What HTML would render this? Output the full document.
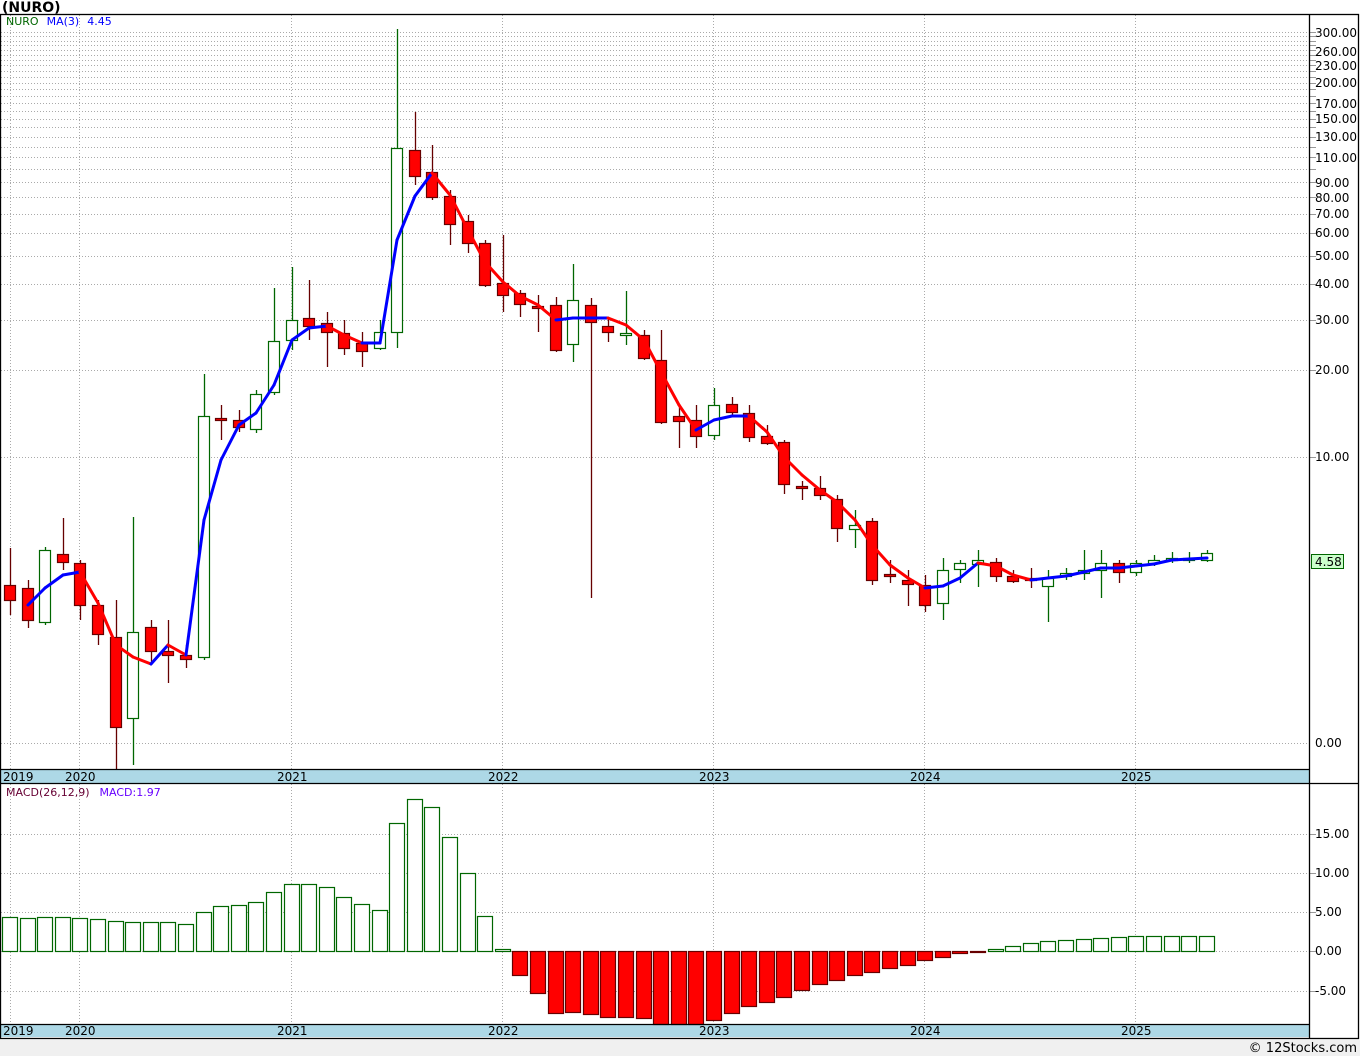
<!DOCTYPE html>
<html><head><meta charset="utf-8">
<style>
html,body{margin:0;padding:0;background:#fff;}
body{width:1360px;height:1056px;overflow:hidden;position:relative;font-family:"Liberation Sans",sans-serif;}
svg text{font-family:"DejaVu Sans","Liberation Sans",sans-serif;}
</style></head><body>
<svg id="s" width="1360" height="1056" xmlns="http://www.w3.org/2000/svg">
<rect x="0" y="1040" width="1360" height="16" fill="#f0f0f0"/>
<text x="2" y="12" font-size="14" font-weight="bold" fill="#000">(NURO)</text>
<g id="grid"></g>
<rect x="1" y="770" width="1308" height="13" fill="#add8e6"/>
<rect x="1" y="1024" width="1308" height="13" fill="#add8e6"/>
<g font-size="12" fill="#000">
<text x="3" y="781">2019</text><text x="65" y="781">2020</text><text x="277" y="781">2021</text><text x="488" y="781">2022</text><text x="699" y="781">2023</text><text x="910" y="781">2024</text><text x="1121" y="781">2025</text>
<text x="3" y="1035">2019</text><text x="65" y="1035">2020</text><text x="277" y="1035">2021</text><text x="488" y="1035">2022</text><text x="699" y="1035">2023</text><text x="910" y="1035">2024</text><text x="1121" y="1035">2025</text>
</g>
<g id="shapes"></g>
<g stroke="#000" stroke-width="1.3" fill="none">
<rect x="0.5" y="14.5" width="1358" height="1024"/>
<line x1="1309.5" y1="14" x2="1309.5" y2="1038"/>
<line x1="0" y1="769.5" x2="1309" y2="769.5"/>
<line x1="0" y1="783.5" x2="1359" y2="783.5"/>
<line x1="0" y1="1024.5" x2="1309" y2="1024.5"/>
</g>
<text x="6" y="25" font-size="11"><tspan fill="#006600">NURO</tspan><tspan fill="#0000ff" dx="8">MA(3)</tspan><tspan fill="#0000ff" dx="8">4.45</tspan></text>
<text x="6" y="796" font-size="11"><tspan fill="#660033">MACD(26,12,9)</tspan><tspan fill="#6600ff" dx="10">MACD:1.97</tspan></text>
<g font-size="12" fill="#000">
<text x="1315" y="37">300.00</text><text x="1315" y="56">260.00</text><text x="1315" y="70">230.00</text><text x="1315" y="87">200.00</text>
<text x="1315" y="108">170.00</text><text x="1315" y="123">150.00</text><text x="1315" y="141">130.00</text><text x="1315" y="162">110.00</text>
<text x="1315" y="187">90.00</text><text x="1315" y="202">80.00</text><text x="1315" y="218">70.00</text><text x="1315" y="237">60.00</text>
<text x="1315" y="260">50.00</text><text x="1315" y="288">40.00</text><text x="1315" y="324">30.00</text><text x="1315" y="374">20.00</text>
<text x="1315" y="461">10.00</text><text x="1315" y="747">0.00</text>
<text x="1315" y="838">15.00</text><text x="1315" y="877">10.00</text><text x="1315" y="916">5.00</text><text x="1315" y="955">0.00</text><text x="1315" y="995">-5.00</text>
</g>
<rect x="1311.5" y="554.5" width="32" height="14" fill="#ccffcc" stroke="#006600"/>
<text x="1315" y="566" font-size="12" fill="#000">4.58</text>
<text x="1357" y="1052" font-size="13" fill="#000" text-anchor="end">© 12Stocks.com</text>
</svg>
<script>
var NS="http://www.w3.org/2000/svg";
function el(p,t,a){var e=document.createElementNS(NS,t);for(var k in a)e.setAttribute(k,a[k]);p.appendChild(e);return e;}
var G=document.getElementById('grid'),S=document.getElementById('shapes');
var years=[10,79,291,502,713,924,1135];
years.forEach(function(x){el(G,'line',{x1:x+.5,y1:15,x2:x+.5,y2:769,stroke:'#aaa','stroke-dasharray':'1,2'});el(G,'line',{x1:x+.5,y1:784,x2:x+.5,y2:1024,stroke:'#aaa','stroke-dasharray':'1,2'});});
function py(v){return 457-287.7*Math.log10(v/10);}
for(var v=10;v<=300;v+=10){var y=Math.round(py(v))+.5;el(G,'line',{x1:1,y1:y,x2:1309,y2:y,stroke:'#aaa','stroke-dasharray':'1,2'});el(G,'line',{x1:1310,y1:y,x2:1316,y2:y,stroke:'#999'});}
[743.5].forEach(function(y){el(G,'line',{x1:1,y1:y,x2:1309,y2:y,stroke:'#aaa','stroke-dasharray':'1,2'});});
[834.5,873.5,912.5,951.5,991.5].forEach(function(y){el(G,'line',{x1:1,y1:y,x2:1309,y2:y,stroke:'#aaa','stroke-dasharray':'1,2'});el(G,'line',{x1:1310,y1:y,x2:1316,y2:y,stroke:'#999'});});
var C=[[585,600,548,615,0],[588,620,580,628,0],[550,622,547,625,1],[554,562,518,570,0],[563,605,560,620,0],[605,634,600,645,0],[637,727,600,770,0],[632,718,517,765,1],[627,651,620,665,0],[651,655,620,683,0],[655,659,645,668,0],[416,657,374,660,1],[418,420,405,440,0],[420,427,410,432,0],[394,429,390,433,1],[341,392,288,395,1],[320,340,267,350,1],[318,326,280,340,0],[323,332,312,367,0],[333,348,320,355,0],[343,351,332,367,0],[332,348,320,350,1],[148,332,29,348,1],[150,176,112,185,0],[172,197,145,200,0],[196,224,190,245,0],[221,243,215,253,0],[243,285,240,287,0],[283,295,235,312,0],[293,304,290,317,0],[306,308,295,332,0],[305,350,297,352,0],[300,344,264,362,1],[305,322,298,598,0],[326,332,318,342,0],[333,335,291,345,1],[335,358,330,360,0],[360,422,330,424,0],[416,421,405,448,0],[420,436,405,448,0],[405,435,388,440,1],[404,412,397,415,0],[413,437,405,442,0],[436,443,425,445,0],[442,484,440,494,0],[486,488,481,500,0],[488,495,476,500,0],[499,528,495,542,0],[525,529,510,548,1],[521,580,518,585,0],[574,576,560,583,0],[580,584,570,606,0],[585,605,575,612,0],[570,603,558,620,1],[563,569,560,583,1],[560,564,550,587,1],[562,576,558,582,0],[576,581,570,583,0],[578,580,568,588,0],[578,586,570,622,1],[573,576,568,580,1],[570,573,550,580,1],[563,570,550,598,1],[563,572,560,583,0],[563,572,560,576,1],[560,563,555,566,1],[558,560,552,563,1],[558,560,552,563,1],[553,560,550,562,1]];
function X(i){return Math.round(10+i*17.6);}
C.forEach(function(c,i){var x=X(i),g=c[4];var wc=g?'#006600':'#660000';
el(S,'line',{x1:x+.5,y1:c[2],x2:x+.5,y2:c[3],stroke:wc,'stroke-width':1.3});
var h=Math.max(c[1]-c[0],2);
el(S,'rect',{x:x-5.5,y:c[0]+.5,width:11,height:h,fill:g?'#fff':'#ff0000',stroke:g?'#006600':'#660000','stroke-width':1.2});});
var M={1:605,2:588,3:575,4:572,5:603,6:645,7:657,8:664,9:645,10:655,11:520,12:460,13:425,14:413,15:385,16:340,17:328,18:326,19:335,20:343,21:343,22:240,23:196,24:173,25:195,26:230,27:262,28:282,29:296,30:305,31:320,32:318,33:318,34:318,35:325,36:340,37:372,38:405,39:430,40:420,41:416,42:416,43:432,44:457,45:475,46:490,47:502,48:520,49:545,50:565,51:578,52:588,53:586,54:578,55:563,56:566,57:575,58:580,59:578,60:576,61:572,62:568,63:568,64:566,65:564,66:560,67:559,68:558};
for(var i=2;i<=68;i++){var a=M[i-1],b=M[i];el(S,'line',{x1:X(i-1),y1:a,x2:X(i),y2:b,stroke:b<=a?'#0000ff':'#ff0000','stroke-width':3,'stroke-linecap':'round'});}
var B=[917,918,917,917,918,919,921,922,922,922,924,912,906,905,902,892,884,884,887,897,904,910,823,799,807,837,873,916,949,975,993,1013,1012,1014,1017,1017,1018,1024,1024,1024,1020,1013,1006,1002,997,990,984,980,975,972,968,965,960,957,953,952,949,946,943,941,940,939,938,937,936,936,936,936,936];
B.forEach(function(t,i){var x=X(i);if(t<951){el(S,'rect',{x:x-7.5,y:t+.5,width:15,height:951-t,fill:'#fff',stroke:'#006600','stroke-width':1.2});}else{el(S,'rect',{x:x-7.5,y:951.5,width:15,height:Math.min(t,1024)-951,fill:'#ff0000',stroke:'#660000','stroke-width':1.2});}});
</script>
</body></html>
